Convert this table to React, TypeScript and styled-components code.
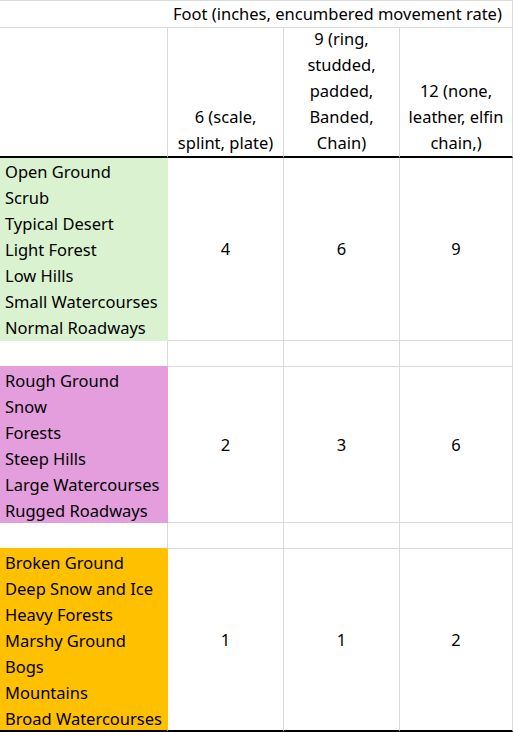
import React from "react";
import styled, { createGlobalStyle } from "styled-components";

const GlobalStyle = createGlobalStyle`
  body {
    margin: 0;
    background: #ffffff;
    font-family: "Noto Sans", "Open Sans", sans-serif;
    color: #000000;
  }
`;

const grid = "#dadada";

type Group = {
  fill: string;
  terrain: string[];
  rates: string[];
};

const groups: Group[] = [
  {
    fill: "#daf2d0",
    terrain: [
      "Open Ground",
      "Scrub",
      "Typical Desert",
      "Light Forest",
      "Low Hills",
      "Small Watercourses",
      "Normal Roadways",
    ],
    rates: ["4", "6", "9"],
  },
  {
    fill: "#e49edd",
    terrain: [
      "Rough Ground",
      "Snow",
      "Forests",
      "Steep Hills",
      "Large Watercourses",
      "Rugged Roadways",
    ],
    rates: ["2", "3", "6"],
  },
  {
    fill: "#ffc000",
    terrain: [
      "Broken Ground",
      "Deep Snow and Ice",
      "Heavy Forests",
      "Marshy Ground",
      "Bogs",
      "Mountains",
      "Broad Watercourses",
    ],
    rates: ["1", "1", "2"],
  },
];

const armour = [
  ["6 (scale,", "splint, plate)"],
  ["9 (ring,", "studded,", "padded,", "Banded,", "Chain)"],
  ["12 (none,", "leather, elfin", "chain,)"],
];

const Sheet = styled.div`
  display: grid;
  grid-template-columns: 168px 116px 116px 113px;
  width: 513px;
  border-top: 1px solid ${grid};
  font-size: 16.5px;
  line-height: 26px;
`;

const Cell = styled.div<{ $h: number; $fill?: string; $under?: string; $thick?: boolean }>`
  box-sizing: border-box;
  height: ${(p) => p.$h}px;
  background: ${(p) => p.$fill || "transparent"};
  border-right: 1px solid ${(p) => p.$fill || grid};
  border-bottom: ${(p) => (p.$thick ? "2px solid #000" : `1px solid ${p.$under || p.$fill || grid}`)};
  overflow: hidden;
`;

const BlankCorner = styled(Cell)`
  border-right: none;
`;

const TitleCell = styled(Cell)`
  grid-column: span 3;
  padding-left: 5px;
  white-space: nowrap;
`;

const HeadCell = styled(Cell)`
  display: flex;
  flex-direction: column;
  justify-content: flex-end;
  align-items: center;
  text-align: center;
`;

const TerrainCell = styled(Cell)`
  display: flex;
  flex-direction: column;
  padding: 1px 0 0 5px;
`;

const RateCell = styled(Cell)`
  display: flex;
  align-items: center;
  justify-content: center;
`;

const Line = styled.span`
  display: block;
  flex: none;
  height: 26px;
  white-space: nowrap;
`;

const groupHeight = (g: Group, i: number) => {
  const last = i === groups.length - 1;
  const lines = g.terrain.length * 26;
  if (i === 0) return lines + 1;
  return last ? lines + 1 : lines;
};

export default function App() {
  return (
    <>
      <GlobalStyle />
      <Sheet>
        <BlankCorner $h={27} />
        <TitleCell $h={27}>Foot (inches, encumbered movement rate)</TitleCell>

        <Cell $h={130} $thick />
        {armour.map((lines, i) => (
          <HeadCell key={i} $h={130} $thick>
            {lines.map((l) => (
              <Line key={l}>{l}</Line>
            ))}
          </HeadCell>
        ))}

        {groups.map((g, i) => {
          const last = i === groups.length - 1;
          const h = groupHeight(g, i);
          const next = groups[i + 1];
          return (
            <React.Fragment key={g.fill}>
              <TerrainCell $h={h} $fill={g.fill} $thick={last}>
                {g.terrain.map((t) => (
                  <Line key={t}>{t}</Line>
                ))}
              </TerrainCell>
              {g.rates.map((r, j) => (
                <RateCell key={j} $h={h} $thick={last}>
                  {r}
                </RateCell>
              ))}
              {next && (
                <>
                  <Cell $h={26} $under={next.fill} />
                  <Cell $h={26} />
                  <Cell $h={26} />
                  <Cell $h={26} />
                </>
              )}
            </React.Fragment>
          );
        })}
      </Sheet>
    </>
  );
}
